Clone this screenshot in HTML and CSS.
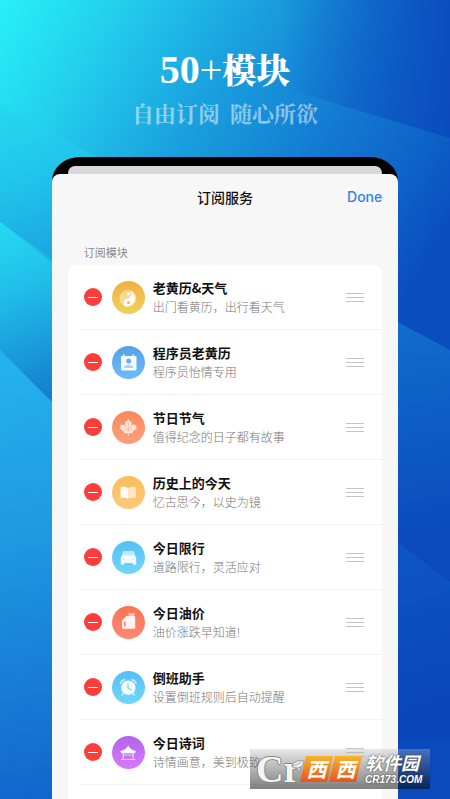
FILE: index.html
```
<!DOCTYPE html>
<html lang="zh-CN">
<head>
<meta charset="utf-8">
<meta name="viewport" content="width=device-width, initial-scale=1">
<title>订阅服务</title>
<link rel="stylesheet" href="styles.css">
</head>
<body>
<svg class="backdrop" viewBox="0 0 450 799" preserveAspectRatio="none" aria-hidden="true">
  <defs>
    <linearGradient id="base" gradientUnits="userSpaceOnUse" x1="0" y1="0" x2="430" y2="260">
      <stop offset="0" stop-color="#28f0f9"/><stop offset=".2" stop-color="#23d0ed"/><stop offset=".45" stop-color="#1aa0de"/><stop offset=".7" stop-color="#1379d1"/><stop offset=".85" stop-color="#0f66c9"/><stop offset="1" stop-color="#0a4dbf"/>
    </linearGradient>
    <linearGradient id="shade" gradientUnits="userSpaceOnUse" x1="280" y1="60" x2="450" y2="60">
      <stop offset="0" stop-color="#0b4fc0" stop-opacity="0"/><stop offset="1" stop-color="#0a4abd" stop-opacity=".9"/>
    </linearGradient>
    <linearGradient id="l1" gradientUnits="userSpaceOnUse" x1="10" y1="110" x2="70" y2="265">
      <stop offset="0" stop-color="#24d6f0"/><stop offset=".4" stop-color="#21c6eb"/><stop offset="1" stop-color="#1a9fdf"/>
    </linearGradient>
    <linearGradient id="l2" gradientUnits="userSpaceOnUse" x1="0" y1="230" x2="60" y2="390">
      <stop offset="0" stop-color="#25d8f1"/><stop offset=".35" stop-color="#21bfe9"/><stop offset="1" stop-color="#147fd0"/>
    </linearGradient>
    <linearGradient id="l3" gradientUnits="userSpaceOnUse" x1="0" y1="360" x2="100" y2="799">
      <stop offset="0" stop-color="#24b2ee"/><stop offset=".4" stop-color="#1f98e2"/><stop offset="1" stop-color="#1163ca"/>
    </linearGradient>
    <linearGradient id="r1" gradientUnits="userSpaceOnUse" x1="398" y1="330" x2="440" y2="540">
      <stop offset="0" stop-color="#116ccb"/><stop offset="1" stop-color="#0a4abc"/>
    </linearGradient>
    <linearGradient id="r2" gradientUnits="userSpaceOnUse" x1="390" y1="550" x2="440" y2="700">
      <stop offset="0" stop-color="#0d57c3"/><stop offset="1" stop-color="#0946b9"/>
    </linearGradient>
  </defs>
  <rect width="450" height="799" fill="url(#base)"/>
  <path d="M230 0H450V138L280 87Z" fill="url(#shade)"/>
  <path d="M0 105L110 164V300L0 222Z" fill="url(#l1)"/>
  <path d="M0 222L110 308V462L0 350Z" fill="url(#l2)"/>
  <path d="M0 350L110 460V799H0Z" fill="url(#l3)"/>
  <path d="M390 318L450 350V582L390 536Z" fill="url(#r1)"/>
  <path d="M390 536L450 582V741H390Z" fill="url(#r2)"/>
  <path d="M390 741H450V799H390Z" fill="#0a4abc"/>
</svg>

<header class="hero">
  <h1><span class="num">50<span class="plus">+</span></span>模块</h1>
  <p><span>自由订阅</span><span>随心所欲</span></p>
</header>

<main class="phone">
  <div class="behind"></div>
  <div class="sheet">
    <div class="bar">
      <h2>订阅服务</h2>
      <button class="done" type="button">Done</button>
    </div>
    <h3 id="modules">订阅模块</h3>
    <ul class="card" aria-labelledby="modules">
      <li class="row">
        <button class="remove" type="button" aria-label="移除"></button>
        <svg class="icon gold" viewBox="0 0 33 33" aria-hidden="true"><circle cx="16" cy="17.500" r="8.500" fill="#fff" opacity=".4"/><path d="M18.500 9.400A8.500 8.500 0 0 1 13 25.300C10.500 23 11.500 19 15 17.800 19 16.500 20.500 13 18.500 9.400Z" fill="#fff" opacity=".92"/><circle cx="16.500" cy="13" r="1.600" fill="#fff"/><circle cx="16.500" cy="21.700" r="1.600" fill="#efc050"/></svg>
        <div class="text"><h4>老黄历&amp;天气</h4><p>出门看黄历，出行看天气</p></div>
        <button class="drag" type="button" aria-label="排序"><i></i><i></i><i></i></button>
      </li>
      <li class="row">
        <button class="remove" type="button" aria-label="移除"></button>
        <svg class="icon blue" viewBox="0 0 33 33" aria-hidden="true"><path d="M11 8.500h1.500v1.500h8V8.500H22v1.500h1.500a1 1 0 0 1 1 1v12.500a1 1 0 0 1-1 1H10a1 1 0 0 1-1-1V11a1 1 0 0 1 1-1h1Z" fill="#fff" opacity=".93"/><circle cx="16.700" cy="15" r="2.500" fill="#62b0f2"/><path d="M12 22C12 19.700 14 19 16.700 19s4.700.7 4.700 3Z" fill="#a5d2fa"/></svg>
        <div class="text"><h4>程序员老黄历</h4><p>程序员怡情专用</p></div>
        <button class="drag" type="button" aria-label="排序"><i></i><i></i><i></i></button>
      </li>
      <li class="row">
        <button class="remove" type="button" aria-label="移除"></button>
        <svg class="icon coral" viewBox="0 0 33 33" aria-hidden="true"><path d="M16.300 8l1.800 2.700 1.500-.6-.4 5.200 2.300-2.600.7 1.500 2.300-.5-.6 2.600 1.300.6-5 4.200.5 1.500-3.900-.6-.2 3h-.8l-.1-3-3.800.6.5-1.500-4.900-4.200 1.300-.6-.6-2.600 2.300.5.700-1.500 2.200 2.600-.4-5.200 1.500.6Z" fill="#fff" opacity=".8"/><path d="M16.300 21V11M16.300 19l-3-4M16.300 19l3-4M15.500 20l-4-3M17 20l4-3" fill="none" stroke="#fd9c78" stroke-width=".6"/></svg>
        <div class="text"><h4>节日节气</h4><p>值得纪念的日子都有故事</p></div>
        <button class="drag" type="button" aria-label="排序"><i></i><i></i><i></i></button>
      </li>
      <li class="row">
        <button class="remove" type="button" aria-label="移除"></button>
        <svg class="icon amber" viewBox="0 0 33 33" aria-hidden="true"><path d="M16.200 12.200C14 10.600 11 10.600 8.500 11.200V22c2.500-.6 5.500-.4 7.700.8Z" fill="#fff" opacity=".93"/><path d="M16.200 12.200c2.200-1.600 5.200-1.600 7.700-1V22c-2.500-.6-5.500-.4-7.700.8Z" fill="#fff" opacity=".6"/></svg>
        <div class="text"><h4>历史上的今天</h4><p>忆古思今，以史为镜</p></div>
        <button class="drag" type="button" aria-label="排序"><i></i><i></i><i></i></button>
      </li>
      <li class="row">
        <button class="remove" type="button" aria-label="移除"></button>
        <svg class="icon sky" viewBox="0 0 33 33" aria-hidden="true"><path d="M12.500 10h8q1.200 0 1.700 1.200l1.300 4H9.500l1.300-4Q11.300 10 12.500 10Z" fill="#fff" opacity=".6"/><path d="M10.200 14.500h12.600l1.400 2v6.300q0 1-1 1h-1.400q-1 0-1-1v-.9h-8.600v.9q0 1-1 1H9.800q-1 0-1-1v-6.300Z" fill="#fff" opacity=".9"/><path d="M11 18.200h1.600M20.400 18.200H22" stroke="#9adffa"/></svg>
        <div class="text"><h4>今日限行</h4><p>道路限行，灵活应对</p></div>
        <button class="drag" type="button" aria-label="排序"><i></i><i></i><i></i></button>
      </li>
      <li class="row">
        <button class="remove" type="button" aria-label="移除"></button>
        <svg class="icon red" viewBox="0 0 33 33" aria-hidden="true"><rect x="16.500" y="7" width="6" height="3.500" rx=".6" fill="#fff" opacity=".5"/><path d="M14.500 10h7.700q1 0 1 1v10.800q0 1-1 1H11q-1 0-1-1v-7.300Z" fill="#fff" opacity=".9"/><rect x="12" y="15.500" width="1.500" height="5" rx=".7" fill="#fd7d61"/></svg>
        <div class="text"><h4>今日油价</h4><p>油价涨跌早知道!</p></div>
        <button class="drag" type="button" aria-label="排序"><i></i><i></i><i></i></button>
      </li>
      <li class="row">
        <button class="remove" type="button" aria-label="移除"></button>
        <svg class="icon sky" viewBox="0 0 33 33" aria-hidden="true"><g fill="none" stroke="#fff" opacity=".65" stroke-linecap="round"><path d="M8.500 12.500q.5-3 4-3.700M24 12.500q-.5-3-4-3.700" stroke-width="1.500"/><path d="M11.500 22.500l-1.300 1.500M21 22.500l1.300 1.500" stroke-width="1.600"/></g><circle cx="16.300" cy="16.700" r="7.200" fill="#fff" opacity=".9"/><path d="M16 12.200v4.700l3.500 2" fill="none" stroke="#7dd4f8" stroke-width="1.200"/></svg>
        <div class="text"><h4>倒班助手</h4><p>设置倒班规则后自动提醒</p></div>
        <button class="drag" type="button" aria-label="排序"><i></i><i></i><i></i></button>
      </li>
      <li class="row">
        <button class="remove" type="button" aria-label="移除"></button>
        <svg class="icon purple" viewBox="0 0 33 33" aria-hidden="true"><path d="M16.200 9.500Q18 13.500 24.300 15.300L22.800 17.300H9.600L8 15.300Q14.500 13.500 16.200 9.500Z" fill="#fff" opacity=".95"/><path d="M11.200 17v6M21.200 17v6M9 23.500h14.500M11.200 19h10" fill="none" stroke="#fff" stroke-width="1.200" opacity=".65"/></svg>
        <div class="text"><h4>今日诗词</h4><p>诗情画意，美到极致</p></div>
        <button class="drag" type="button" aria-label="排序"><i></i><i></i><i></i></button>
      </li>
    </ul>
  </div>
</main>

<aside class="mark">
  <span class="cr">Cr</span>
  <svg class="leaf" viewBox="0 0 16 12" aria-hidden="true"><path d="M1 7Q5 0 15 2Q14 9 8 10Q4 11 1 7Z" fill="#eee" stroke="#777" stroke-width=".8"/><path d="M2 7.500Q7 6 12 3.500" fill="none" stroke="#999" stroke-width=".8"/></svg>
  <span class="tile">西</span><span class="tile">西</span>
  <span class="site"><b>软件园</b><small>CR173.COM</small></span>
</aside>
</body>
</html>
```
FILE: styles.css
```
* { box-sizing: border-box; margin: 0; padding: 0; }
body {
  position: relative;
  min-height: 100vh;
  display: flex;
  flex-direction: column;
  align-items: center;
  overflow-x: hidden;
  background: #0a4abc;
  font-family: "Noto Sans CJK SC", sans-serif;
}
button { border: 0; background: none; font: inherit; cursor: pointer; }
.backdrop { position: absolute; inset: 0; width: 100%; height: 100%; z-index: -1; }

.hero { padding: 47px 0 32px; text-align: center; color: #fff; }
.hero h1 {
  display: flex;
  align-items: baseline;
  justify-content: center;
  font: 900 34px/44px "Noto Serif CJK SC", "Noto Sans CJK SC", serif;
}
.num { font: 700 40px/44px "Liberation Serif", serif; }
.plus { font-weight: 400; }
.hero p {
  display: flex;
  justify-content: center;
  gap: 10px;
  margin-top: 8px;
  font: 700 22px/25px "Noto Serif CJK SC", "Noto Sans CJK SC", serif;
  color: rgba(255, 255, 255, .5);
}

.phone {
  flex: 1;
  display: flex;
  flex-direction: column;
  width: 77%;
  padding-top: 9px;
  background: #000;
  border-radius: 28px 28px 0 0 / 24px 24px 0 0;
}
.behind { height: 8px; margin: 0 16px; border-radius: 7px 7px 0 0; background: #d8d8d8; }
.sheet {
  flex: 1;
  display: flex;
  flex-direction: column;
  padding: 0 16px;
  background: #f7f7f7;
  border-radius: 8px 8px 0 0;
}
.bar { display: grid; grid-template-columns: 1fr auto 1fr; align-items: center; height: 46px; }
.bar h2 { grid-column: 2; font-size: 14px; line-height: 20px; font-weight: 500; color: #111; }
.done { justify-self: end; font: 500 14px/20px Inter, sans-serif; color: #2f83f0; }
.sheet h3 { margin: 24px 0 5px 16px; font-size: 11px; line-height: 16px; font-weight: 400; color: #8b8b8b; }
.card { flex: 1; list-style: none; background: #fff; border-radius: 8px 8px 0 0; padding-left: 12px; }
.row {
  display: flex;
  align-items: center;
  height: 65px;
  padding: 0 18px 0 4px;
  border-bottom: 1px solid #f2f2f2;
}
.remove {
  display: grid;
  place-items: center;
  width: 18px;
  height: 18px;
  border-radius: 50%;
  background: #fc3d39;
}
.remove::before { content: ""; width: 10px; height: 1px; background: #fff; }
.icon { width: 33px; height: 33px; margin: 0 8px 0 10px; border-radius: 50%; }
.gold { background: linear-gradient(#f2b040, #efd25c); }
.blue { background: linear-gradient(#589fe5, #6dbbfb); }
.coral { background: linear-gradient(#f98a59, #fe9f7b); }
.amber { background: linear-gradient(#f9bd5c, #ffc97a); }
.sky { background: linear-gradient(#55c0f4, #71d6fc); }
.red { background: linear-gradient(#fa7454, #fe8871); }
.purple { background: linear-gradient(#b363ee, #d67afb); }
.text { flex: 1; white-space: nowrap; }
.text h4 { font-size: 13px; line-height: 19px; font-weight: 700; color: #111; }
.text p { font-size: 12px; line-height: 19px; font-weight: 300; color: #777; }
.drag { display: grid; gap: 3px; width: 18px; }
.drag i { height: 1px; background: #c4c4c4; }

.mark {
  position: absolute;
  right: 20px;
  bottom: 10px;
  display: flex;
  align-items: center;
  width: 180px;
  height: 40px;
  padding-left: 6px;
  background: linear-gradient(rgba(190, 190, 190, .35), rgba(0, 0, 0, .5));
  white-space: nowrap;
}
.cr {
  width: 44px;
  font: 700 38px/40px "Liberation Serif", serif;
  color: #f4f4f4;
  text-shadow: 1px 0 0 #888, -1px 0 0 #888, 0 1px 0 #888, 0 -1px 0 #888;
}
.leaf { position: absolute; left: 41px; top: 10px; width: 14px; height: 11px; }
.tile {
  display: grid;
  place-items: center;
  width: 33px;
  height: 26px;
  margin-right: -4px;
  background: linear-gradient(#f8b42c, #e8541c);
  clip-path: polygon(18% 0, 100% 0, 82% 100%, 0 100%);
  color: #fff;
  font-size: 20px;
  line-height: 24px;
  font-weight: 700;
  font-style: italic;
}
.site { display: grid; gap: 2px; margin-left: 7px; color: #fff; font-style: italic; text-shadow: 0 0 2px #333; }
.site b { font-size: 18px; line-height: 20px; }
.site small { font: italic 700 10px/12px "Liberation Sans", sans-serif; }
```
